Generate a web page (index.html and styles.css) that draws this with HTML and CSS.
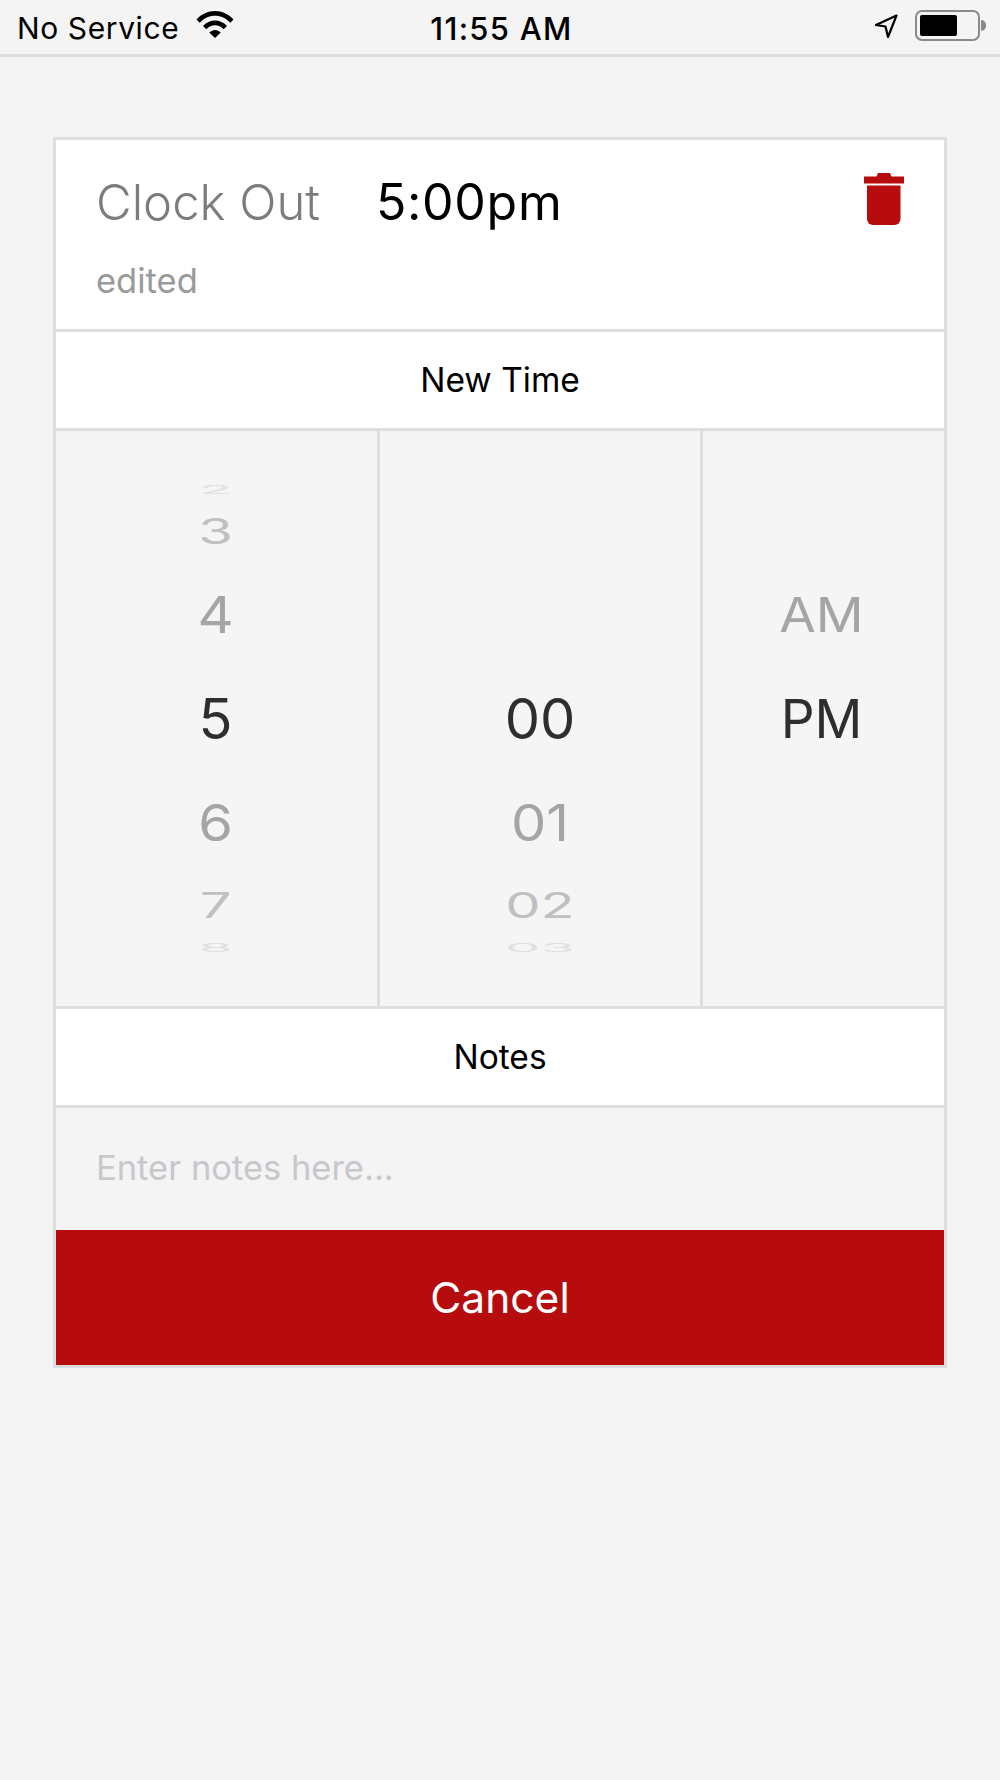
FILE: index.html
```html
<!DOCTYPE html>
<html lang="en">
<head>
<meta charset="utf-8">
<title>Edit time entry</title>
<link rel="stylesheet" href="styles.css">
</head>
<body>
<header class="status-bar">
  <div class="status-left">
    <span class="carrier">No Service</span>
    <svg class="wifi" viewBox="0 0 38 28" aria-hidden="true">
      <path d="M0.5 9.5C5.5 4 12 1 19 1s13.500 3 18.500 8.500l-3.200 3.300C30.100 8.300 24.800 5.800 19 5.800S7.900 8.300 3.700 12.800z"/>
      <path d="M7 16C10.300 12.400 14.500 10.500 19 10.500s8.700 1.900 12 5.500l-3.300 3.300C25.200 16.700 22.200 15.300 19 15.300s-6.200 1.400-8.700 4z"/>
      <path d="M13.300 22.500C15 20.800 16.900 19.900 19 19.900s4 .9 5.700 2.600L19 28z"/>
    </svg>
  </div>
  <div class="clock">11:55 AM</div>
  <div class="status-right">
    <svg class="locate" viewBox="0 0 26 26" aria-hidden="true">
      <path d="M23.500 2.500 3 12l9.500 1.500L15 24z" fill="none" stroke="#000" stroke-width="2.200" stroke-linejoin="round"/>
    </svg>
    <div class="battery"><div class="battery-level"></div></div>
    <div class="battery-nub"></div>
  </div>
</header>

<main class="card">
  <section class="entry">
    <div class="entry-main">
      <div class="entry-line">
        <span class="entry-label">Clock Out</span>
        <span class="entry-time">5:00pm</span>
      </div>
      <div class="entry-note">edited</div>
    </div>
    <svg class="trash" viewBox="0 0 40 52" aria-hidden="true">
      <path d="M12.500 3.500 14 0h12l1.500 3.500H40v7H0v-7z"/>
      <path d="M3 12.500h33.500V46a6 6 0 0 1-6 6H9a6 6 0 0 1-6-6z"/>
    </svg>
  </section>

  <div class="section-title">New Time</div>

  <section class="picker">
    <div class="wheel wheel-hour">
      <div class="item far">2</div>
      <div class="item mid">3</div>
      <div class="item near">4</div>
      <div class="item current">5</div>
      <div class="item near">6</div>
      <div class="item mid">7</div>
      <div class="item far">8</div>
    </div>
    <div class="wheel wheel-minute">
      <div class="item far"></div>
      <div class="item mid"></div>
      <div class="item near"></div>
      <div class="item current">00</div>
      <div class="item near">01</div>
      <div class="item mid">02</div>
      <div class="item far">03</div>
    </div>
    <div class="wheel wheel-period">
      <div class="item far"></div>
      <div class="item mid"></div>
      <div class="item near">AM</div>
      <div class="item current">PM</div>
    </div>
  </section>

  <div class="section-title">Notes</div>

  <div class="notes-input">Enter notes here...</div>

  <button class="cancel" type="button">Cancel</button>
</main>
</body>
</html>
```
FILE: styles.css
```css
* {
  box-sizing: border-box;
}

html,
body {
  margin: 0;
  height: 100%;
}

body {
  background: #f4f4f4;
  font-family: Inter, "Liberation Sans", sans-serif;
  color: #000;
}

/* Status bar */
.status-bar {
  display: grid;
  grid-template-columns: 1fr auto 1fr;
  align-items: center;
  height: 57px;
  padding: 2px 14px 0 17px;
  border-bottom: 3px solid #dedede;
}

.status-left {
  display: flex;
  align-items: center;
  gap: 17px;
}

.carrier {
  font-size: 30px;
  letter-spacing: 0.6px;
}

.wifi {
  display: block;
  width: 38px;
  height: 28px;
  margin-top: -8px;
}

.clock {
  font-size: 31px;
  font-weight: 550;
  letter-spacing: 1.3px;
}

.status-right {
  display: flex;
  align-items: center;
  justify-content: flex-end;
  margin-top: -5px;
}

.locate {
  display: block;
  width: 26px;
  height: 26px;
  margin-right: 16px;
}

.battery {
  width: 65px;
  height: 31px;
  padding: 3px;
  border: 2px solid #8a8a8a;
  border-radius: 7px;
}

.battery-level {
  width: 37px;
  height: 100%;
  background: #000;
  border-radius: 2px;
}

.battery-nub {
  width: 5px;
  height: 11px;
  margin-left: 1px;
  background: #8a8a8a;
  border-radius: 0 5px 5px 0;
}

/* Card */
.card {
  margin: 80px 53px 0;
  border: 3px solid #dedede;
  display: flex;
  flex-direction: column;
}

.entry {
  display: flex;
  justify-content: space-between;
  height: 192px;
  padding: 33px 40px 0;
  background: #fff;
  border-bottom: 3px solid #dedede;
}

.entry-line {
  display: flex;
  align-items: baseline;
  gap: 56px;
  line-height: 58px;
}

.entry-label {
  font-size: 49px;
  font-weight: 300;
  color: #7c7c7c;
}

.entry-time {
  font-size: 50px;
  letter-spacing: 0.7px;
}

.entry-note {
  margin-top: 28px;
  font-size: 34.5px;
  color: #9a9a9a;
}

.trash {
  display: block;
  width: 40px;
  height: 52px;
  fill: #b70c0d;
}

.section-title {
  display: flex;
  align-items: center;
  justify-content: center;
  height: 99px;
  background: #fff;
  border-bottom: 3px solid #dedede;
  font-size: 33.5px;
}

/* Time picker */
.picker {
  display: grid;
  grid-template-columns: 324px 323px 1fr;
  height: 578px;
  padding-top: 48px;
  background: #f5f5f5;
  border-bottom: 3px solid #dedede;
  background-clip: padding-box;
}

.wheel {
  margin-top: -48px;
  padding-top: 48px;
  border-right: 3px solid #dedede;
}

.wheel-hour {
  padding-right: 2px;
}

.wheel-period {
  padding-right: 4px;
  border-right: 0;
}

.item {
  display: flex;
  align-items: center;
  justify-content: center;
  font-size: 56px;
  line-height: 1;
}

.wheel-period .item {
  font-size: 53px;
}

.current {
  height: 104px;
  color: #2e2e2e;
}

.near {
  height: 104px;
  color: #a5a5a5;
  transform: scaleY(0.9);
}

.mid {
  height: 62px;
  color: #c0c0c0;
  transform: scaleY(0.62);
}

.far {
  height: 22px;
  color: #e0e0e0;
  transform: scaleY(0.22);
}

/* Notes and action */
.notes-input {
  display: flex;
  align-items: center;
  height: 122px;
  padding: 0 40px 3px;
  font-size: 34.5px;
  color: #c7c7cd;
}

.cancel {
  display: block;
  width: 100%;
  height: 135px;
  padding: 0;
  border: 0;
  background: #b70c0d;
  color: #fff;
  font-family: inherit;
  font-size: 42.5px;
}
```
